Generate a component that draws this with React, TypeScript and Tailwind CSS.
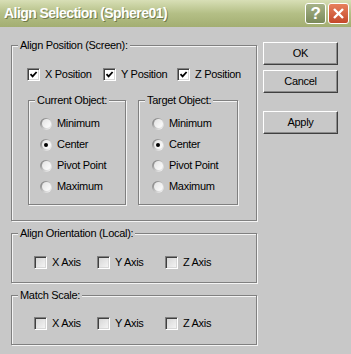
import React from "react";

const gray = "bg-[#c8c8c8]";

function CheckBox({ checked }: { checked: boolean }) {
  return (
    <span
      className={`flex size-[13px] shrink-0 items-center justify-center border border-t-[#808080] border-l-[#808080] border-b-white border-r-white shadow-[inset_1px_1px_0_#404040,inset_-1px_-1px_0_#d8d8d8] ${
        checked ? "bg-white" : "bg-gradient-to-br from-[#d4d4d4] to-[#f6f6f6]"
      }`}
    >
      {checked && (
        <svg width="9" height="9" viewBox="0 0 9 9">
          <path d="M1.5 4.2 L3.6 6.4 L7.6 2" fill="none" stroke="#000" strokeWidth="1.8" />
        </svg>
      )}
    </span>
  );
}

function Check({ label, checked = false, w }: { label: string; checked?: boolean; w: string }) {
  return (
    <div className={`flex items-center ${w}`}>
      <CheckBox checked={checked} />
      <span className="ml-[5px] leading-[13px]">{label}</span>
    </div>
  );
}

function Radio({ label, on = false }: { label: string; on?: boolean }) {
  return (
    <div className="flex h-[21px] items-center">
      <span className="flex size-[12px] shrink-0 items-center justify-center rounded-full bg-gradient-to-br from-[#6e6e6e] via-[#c0c0c0] to-white">
        <span className="flex size-[9px] items-center justify-center rounded-full bg-gradient-to-br from-[#e2e2e2] to-white">
          {on && <span className="size-[4px] rounded-full bg-black" />}
        </span>
      </span>
      <span className="ml-[5px] leading-[13px]">{label}</span>
    </div>
  );
}

function Group({ title, className, children }: { title: string; className: string; children?: React.ReactNode }) {
  return (
    <div className={`border border-[#808080] shadow-[inset_1px_1px_0_#f4f4f4,1px_1px_0_#f4f4f4] ${className}`}>
      <div className={`-mt-[7px] ml-[6px] h-[13px] w-fit px-[2px] leading-[13px] ${gray}`}>{title}</div>
      {children}
    </div>
  );
}

function Button({ label, className = "" }: { label: string; className?: string }) {
  return (
    <div
      className={`flex h-[23px] w-[75px] items-center justify-center border border-t-white border-l-white border-r-[#404040] border-b-[#404040] shadow-[inset_-1px_-1px_0_#8c8c8c] ${className}`}
    >
      {label}
    </div>
  );
}

export default function App() {
  return (
    <div className={`h-[354px] w-[351px] overflow-hidden ${gray} font-['Liberation_Sans',Arial,sans-serif] text-[11px] tracking-[-0.3px] text-black`}>
      <div className="flex h-[27px] items-center bg-gradient-to-b from-[#d8dfb6] via-[#b4bf86] to-[#a3ae72] pl-[4px] pr-[2px]">
        <div className="flex-1 text-[14px] font-bold tracking-[-0.55px] text-white [text-shadow:1px_1px_0_rgba(60,70,30,0.55)]">
          Align Selection (Sphere01)
        </div>
        <div className="flex size-[21px] items-center justify-center rounded-[3px] border border-white bg-gradient-to-b from-[#a6b288] to-[#7b8a5a] text-[17px] font-bold leading-none text-white">
          ?
        </div>
        <div className="ml-[2px] flex size-[21px] items-center justify-center rounded-[3px] border border-white bg-gradient-to-b from-[#e7805c] to-[#c4482a]">
          <svg width="13" height="13" viewBox="0 0 13 13">
            <path d="M2 2 L11 11 M11 2 L2 11" stroke="#fff" strokeWidth="2.4" />
          </svg>
        </div>
      </div>

      <div className="flex pl-[11px] pt-[15px]">
        <div className="mt-[3px] w-[246px]">
          <Group title="Align Position (Screen):" className="h-[176px]">
            <div className="ml-[15px] mt-[16px] flex">
              <Check label="X Position" checked w="w-[76px]" />
              <Check label="Y Position" checked w="w-[74px]" />
              <Check label="Z Position" checked w="w-[70px]" />
            </div>
            <div className="ml-[16px] mt-[19px] flex">
              <Group title="Current Object:" className="h-[105px] w-[98px]">
                <div className="mt-[6px] pl-[11px]">
                  <Radio label="Minimum" />
                  <Radio label="Center" on />
                  <Radio label="Pivot Point" />
                  <Radio label="Maximum" />
                </div>
              </Group>
              <Group title="Target Object:" className="ml-[12px] h-[105px] w-[100px]">
                <div className="mt-[6px] pl-[13px]">
                  <Radio label="Minimum" />
                  <Radio label="Center" on />
                  <Radio label="Pivot Point" />
                  <Radio label="Maximum" />
                </div>
              </Group>
            </div>
          </Group>

          <Group title="Align Orientation (Local):" className="mt-[12px] h-[50px]">
            <div className="ml-[22px] mt-[16px] flex">
              <Check label="X Axis" w="w-[63px]" />
              <Check label="Y Axis" w="w-[68px]" />
              <Check label="Z Axis" w="w-[60px]" />
            </div>
          </Group>

          <Group title="Match Scale:" className="mt-[12px] h-[50px]">
            <div className="ml-[22px] mt-[15px] flex">
              <Check label="X Axis" w="w-[63px]" />
              <Check label="Y Axis" w="w-[68px]" />
              <Check label="Z Axis" w="w-[60px]" />
            </div>
          </Group>
        </div>

        <div className="ml-[6px] flex flex-col">
          <Button label="OK" />
          <Button label="Cancel" className="mt-[5px]" />
          <Button label="Apply" className="mt-[18px]" />
        </div>
      </div>
    </div>
  );
}
